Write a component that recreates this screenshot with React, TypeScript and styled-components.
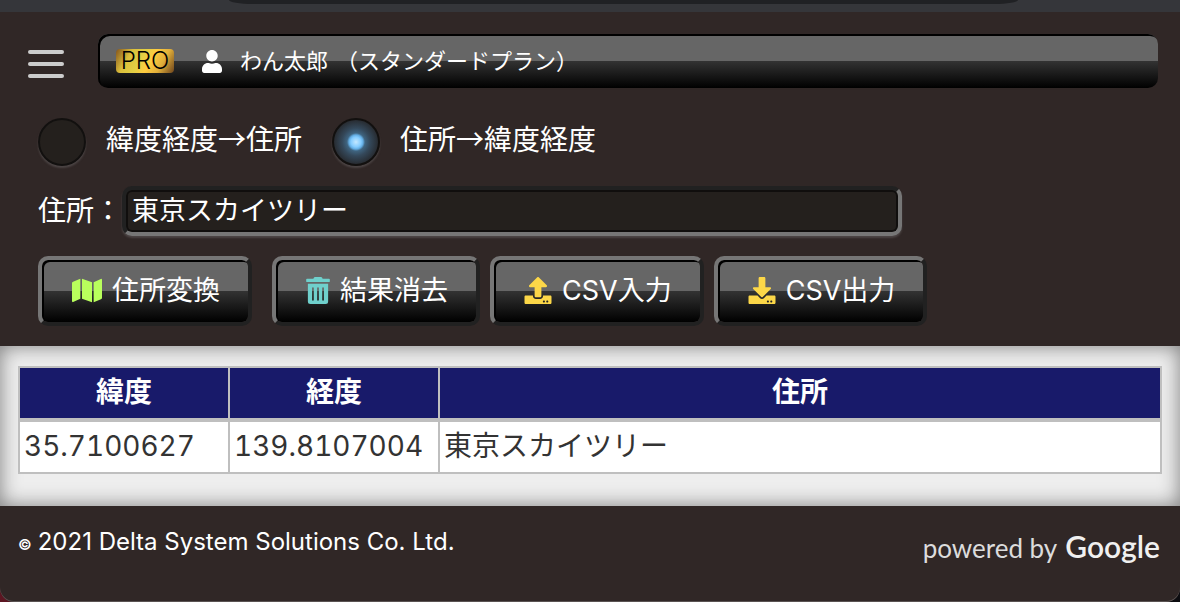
import React, { useState } from 'react';
import styled, { createGlobalStyle } from 'styled-components';
import { FaDownload, FaMap, FaTrashAlt, FaUpload, FaUser } from 'react-icons/fa';

const GlobalStyle = createGlobalStyle`
  *, *::before, *::after { box-sizing: border-box; }
  body {
    margin: 0;
    background: linear-gradient(90deg, #5c1622 0 50%, #0c0c10 50%);
    color: #fff;
    font-family: Inter, "Noto Sans CJK JP", sans-serif;
    font-size: 28px;
  }
`;

const Page = styled.div`
  display: flex;
  flex-direction: column;
  min-height: 100vh;
`;

const BrowserStrip = styled.div`
  display: flex;
  justify-content: center;
  height: 12px;
  padding: 0 162px 0 229px;
  background: #35363a;
`;

const AddressPill = styled.div`
  flex: 1;
  height: 4px;
  background: #202124;
  border-radius: 0 0 24px 24px / 0 0 4px 4px;
`;

const Header = styled.header`
  padding: 22px 22px 20px 38px;
  background: #302726;
`;

const TopBar = styled.div`
  display: flex;
  align-items: center;
  gap: 34px;
  margin-left: -10px;
`;

const MenuButton = styled.button`
  display: flex;
  flex-direction: column;
  justify-content: center;
  gap: 8px;
  width: 36px;
  height: 48px;
  margin-top: 6px;
  padding: 0;
  border: 0;
  background: none;
`;

const MenuLine = styled.span`
  height: 4px;
  border-radius: 2px;
  background: #ccc;
`;

const gloss = 'linear-gradient(#666 0 50%, #333 50%, #000 100%)';

const UserBar = styled.div`
  display: flex;
  flex: 1;
  align-items: center;
  height: 54px;
  padding: 0 18px;
  border-radius: 10px;
  background: ${gloss};
  box-shadow: inset 2px 2px 0 #000;
  font-size: 22px;

  svg { width: 20px; height: 23px; margin: 0 18px 0 28px; }
`;

const PlanBadge = styled.span`
  width: 58px;
  border-radius: 4px;
  background: linear-gradient(120deg, #84541c, #dcc03c 24%, #e2cf44 42%, #ffcc40 58%, #e0ae3a 76%, #6e441c);
  color: #000;
  font-size: 24px;
  font-weight: 300;
  line-height: 24px;
  text-align: center;
`;

const UserName = styled.span`
  display: flex;
  gap: 8px;
  line-height: 32px;
`;

const ModeGroup = styled.fieldset`
  display: flex;
  flex-wrap: wrap;
  gap: 30px;
  margin: 30px 0 0;
  padding: 0;
  border: 0;
`;

const ModeLabel = styled.label`
  display: flex;
  align-items: center;
  gap: 20px;
  font-family: "Noto Sans CJK JP", sans-serif;
  line-height: 40px;

  span { padding-bottom: 8px; }
`;

const Radio = styled.input`
  appearance: none;
  width: 48px;
  height: 48px;
  margin: 0;
  border: 2px solid #12100f;
  border-radius: 50%;
  background: #24201d;
  box-shadow: 0 2px 2px #4c4545;

  &:checked {
    background: radial-gradient(circle, #c4e8ff 0, #84ccff 5px, #64aee4 7px, #3f6480 9px, #34485a 14px, #26282c 23px);
  }
`;

const AddressRow = styled.div`
  display: flex;
  align-items: center;
  margin-top: 20px;

  label { width: 84px; line-height: 42px; }
`;

const AddressInput = styled.input`
  width: 780px;
  min-width: 0;
  height: 50px;
  padding: 0 6px 6px;
  border: 4px solid;
  border-color: #212121 #767676 #767676 #212121;
  border-radius: 10px;
  background: #24201d;
  box-shadow: inset 0 0 0 2px #100e0d, 0 2px 2px #4c4545;
  color: #fff;
  font: inherit;
  font-size: 27px;
`;

const Actions = styled.div`
  display: flex;
  flex-wrap: wrap;
  gap: 10px;
  margin-top: 20px;
`;

const ActionButton = styled.button<{ $tint: string; $spaced?: boolean; $iconWidth?: number }>`
  display: flex;
  align-items: center;
  gap: 10px;
  height: 70px;
  margin-right: ${({ $spaced }) => ($spaced ? '10px' : '0')};
  padding: 0 28px 2px 30px;
  border: 4px solid;
  border-color: #767676 #212121 #212121 #767676;
  border-radius: 10px;
  background: ${gloss} padding-box;
  box-shadow: inset 2px 2px 0 #000;
  color: #fff;
  font: inherit;
  font-size: 27px;

  svg {
    width: ${({ $iconWidth = 28 }) => $iconWidth}px;
    height: 27px;
    color: ${({ $tint }) => $tint};
  }
  span { padding-bottom: 4px; }
`;

const Results = styled.main`
  padding: 20px 18px 32px;
  background: #eee;
  box-shadow: inset 0 0 20px #7c7c7c;
`;

const ResultTable = styled.table`
  width: 100%;
  table-layout: fixed;
  border-collapse: collapse;
  color: #333;
  font-variant-numeric: tabular-nums;

  th, td {
    height: 53px;
    padding: 0 4px 2px;
    border: 2px solid #bfbfbf;
    line-height: 42px;
  }
  th {
    border-bottom-width: 4px;
    background: #181a6a;
    color: #fff;
    font-weight: 700;
  }
  td { background: #fff; text-align: left; }
`;

const NumberColumn = styled.col`
  width: 210px;
`;

const Footer = styled.footer`
  display: flex;
  flex: 1;
  align-items: flex-start;
  justify-content: space-between;
  padding: 20px 20px 20px 18px;
  border-radius: 0 0 14px 14px;
  background: #302726;
  box-shadow: inset 0 -1px 0 #5a5352;
  line-height: 32px;
`;

const Copyright = styled.small`
  font-size: 24px;

  span { font-size: 15px; font-weight: 600; margin-right: 6px; }
`;

const Powered = styled.div`
  display: flex;
  align-items: baseline;
  gap: 8px;
  padding-top: 4px;
  color: #dcdcdc;
  font-family: Lato, sans-serif;
  font-size: 26px;

  strong { color: #f0f0f0; font-size: 30px; font-weight: 600; }
`;

export default function App() {
  const [mode, setMode] = useState('address');
  const [address, setAddress] = useState('東京スカイツリー');

  return (
    <Page>
      <GlobalStyle />
      <BrowserStrip><AddressPill /></BrowserStrip>
      <Header>
        <TopBar>
          <MenuButton type="button" aria-label="メニュー">
            <MenuLine /><MenuLine /><MenuLine />
          </MenuButton>
          <UserBar>
            <PlanBadge>PRO</PlanBadge>
            <FaUser />
            <UserName><span>わん太郎</span><span>（スタンダードプラン）</span></UserName>
          </UserBar>
        </TopBar>
        <ModeGroup>
          <ModeLabel>
            <Radio type="radio" name="mode" checked={mode === 'position'} onChange={() => setMode('position')} />
            <span>緯度経度→住所</span>
          </ModeLabel>
          <ModeLabel>
            <Radio type="radio" name="mode" checked={mode === 'address'} onChange={() => setMode('address')} />
            <span>住所→緯度経度</span>
          </ModeLabel>
        </ModeGroup>
        <AddressRow>
          <label htmlFor="address">住所：</label>
          <AddressInput id="address" type="text" value={address} onChange={(e) => setAddress(e.target.value)} />
        </AddressRow>
        <Actions>
          <ActionButton type="button" $tint="#b9ff5c" $iconWidth={30} $spaced><FaMap /><span>住所変換</span></ActionButton>
          <ActionButton type="button" $tint="#6fd0cc" $iconWidth={24}><FaTrashAlt /><span>結果消去</span></ActionButton>
          <ActionButton type="button" $tint="#fcd748"><FaUpload /><span>CSV入力</span></ActionButton>
          <ActionButton type="button" $tint="#fcd748"><FaDownload /><span>CSV出力</span></ActionButton>
        </Actions>
      </Header>
      <Results>
        <ResultTable>
          <colgroup><NumberColumn /><NumberColumn /><col /></colgroup>
          <thead>
            <tr><th scope="col">緯度</th><th scope="col">経度</th><th scope="col">住所</th></tr>
          </thead>
          <tbody>
            <tr><td>35.7100627</td><td>139.8107004</td><td>東京スカイツリー</td></tr>
          </tbody>
        </ResultTable>
      </Results>
      <Footer>
        <Copyright><span>©</span>2021 Delta System Solutions Co. Ltd.</Copyright>
        <Powered>powered by <strong>Google</strong></Powered>
      </Footer>
    </Page>
  );
}
